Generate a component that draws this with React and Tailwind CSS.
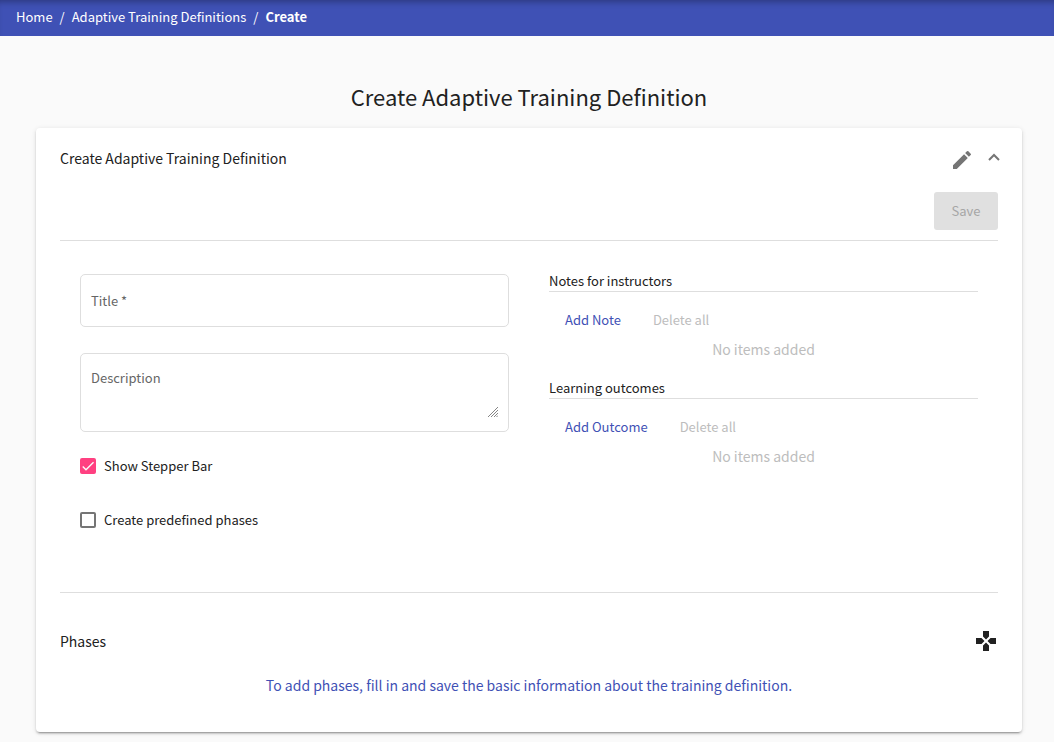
import { useState } from "react";
import { MdEdit, MdGamepad } from "react-icons/md";

function Checkbox({ id, label, defaultChecked }) {
  return (
    <div className="flex h-5 items-center gap-2">
      <span className="grid size-4">
        <input
          id={id}
          type="checkbox"
          defaultChecked={defaultChecked}
          className="peer col-start-1 row-start-1 size-4 appearance-none rounded-xs border-2 border-[#757575] checked:border-[#ff4081] checked:bg-[#ff4081]"
        />
        <svg
          viewBox="0 0 24 24"
          className="pointer-events-none invisible col-start-1 row-start-1 size-4 peer-checked:visible"
          fill="none"
          stroke="#fafafa"
          strokeWidth="2.1"
          aria-hidden="true"
        >
          <path d="M4.1 12.7 9 17.6 20.3 6.3" />
        </svg>
      </span>
      <label htmlFor={id}>{label}</label>
    </div>
  );
}

function ItemList({ title, addLabel }) {
  return (
    <section>
      <h3 className="border-b border-[#dedede]">{title}</h3>
      <div className="flex pt-2.5">
        <button type="button" className="h-9 px-4 text-[#3f51b5]">
          {addLabel}
        </button>
        <button type="button" disabled className="h-9 px-4 text-[#bdbdbd]">
          Delete all
        </button>
      </div>
      <p className="text-center text-[14px] leading-[22px] text-[#bdbdbd]">No items added</p>
    </section>
  );
}

export default function App() {
  const [open, setOpen] = useState(true);

  return (
    <div className="min-h-screen bg-[#fafafa] font-['Noto_Sans_CJK_SC','Noto_Sans',sans-serif] text-[13px] leading-5 text-[#212121]">
      <nav
        aria-label="Breadcrumb"
        className="bg-[#3f51b5] px-4 pt-[7px] pb-[9px] text-white shadow-[inset_0_6px_6px_-4px_rgba(0,0,0,0.3)]"
      >
        <ol className="flex h-5 items-center gap-[7px]">
          <li><a href="#home">Home</a></li>
          <li aria-hidden="true">/</li>
          <li><a href="#definitions">Adaptive Training Definitions</a></li>
          <li aria-hidden="true">/</li>
          <li aria-current="page" className="font-bold">Create</li>
        </ol>
      </nav>

      <main className="pt-11 pr-8 pb-2.5 pl-9">
        <h1 className="text-center text-[22px] leading-8">Create Adaptive Training Definition</h1>

        <div className="mt-4 rounded-sm bg-white px-6 pb-[35px] shadow-[0_3px_1px_-2px_rgba(0,0,0,0.2),0_2px_2px_0_rgba(0,0,0,0.14),0_1px_5px_0_rgba(0,0,0,0.12)]">
          <div className="flex h-16 items-center justify-between">
            <h2 className="pb-1 text-[14px] leading-6">Create Adaptive Training Definition</h2>
            <div className="-mr-0.5 flex items-center gap-3.5 text-[#757575]">
              <MdEdit className="size-6" aria-hidden="true" />
              <button type="button" aria-label="Toggle panel" aria-expanded={open} onClick={() => setOpen(!open)} className="pb-1.5">
                <svg viewBox="0 0 12 8" className="h-2 w-3" fill="none" stroke="currentColor" strokeWidth="2" aria-hidden="true">
                  <path d="M1 7 6 2l5 5" />
                </svg>
              </button>
            </div>
          </div>

          {open && (
            <form>
              <div className="flex justify-end border-b border-[#dedede] pb-2.5">
                <button type="button" disabled className="h-[38px] w-16 rounded-[3px] bg-[#e0e0e0] text-[#a6a6a6]">
                  Save
                </button>
              </div>

              <div className="grid grid-cols-2 gap-10 border-b border-[#dedede] px-5 pt-[30px] pb-[62px]">
                <div className="pt-[3px]">
                  <div className="grid items-center rounded-[5px] border border-[#dedede]">
                    <input
                      id="title"
                      required
                      placeholder=" "
                      className="peer col-start-1 row-start-1 h-[51px] w-full px-2.5 focus:outline-none"
                    />
                    <label
                      htmlFor="title"
                      className="invisible col-start-1 row-start-1 px-2.5 text-[#666666] peer-placeholder-shown:visible"
                    >
                      Title *
                    </label>
                  </div>
                  <div className="mt-[26px] grid items-start rounded-[5px] border border-[#dedede] px-2.5 py-[14px]">
                    <textarea
                      id="description"
                      placeholder=" "
                      className="peer col-start-1 row-start-1 h-[49px] w-full resize-none focus:outline-none"
                    />
                    <label
                      htmlFor="description"
                      className="invisible col-start-1 row-start-1 text-[#666666] peer-placeholder-shown:visible"
                    >
                      Description
                    </label>
                    <svg
                      viewBox="0 0 10 10"
                      className="pointer-events-none col-start-1 row-start-1 size-2.5 self-end justify-self-end"
                      fill="none"
                      stroke="#777777"
                      strokeWidth="0.9"
                      aria-hidden="true"
                    >
                      <path d="M0 10 10 0M3 10l7-7M6 10l4-4M8.500 10 10 8.500" />
                    </svg>
                  </div>
                  <div className="mt-6 flex flex-col gap-[34px]">
                    <Checkbox id="stepper" label="Show Stepper Bar" defaultChecked />
                    <Checkbox id="predefined" label="Create predefined phases" />
                  </div>
                </div>
                <div className="flex flex-col gap-[18px]">
                  <ItemList title="Notes for instructors" addLabel="Add Note" />
                  <ItemList title="Learning outcomes" addLabel="Add Outcome" />
                </div>
              </div>
            </form>
          )}

          <section className="text-[14px] leading-6">
            <div className="flex items-center justify-between pt-9">
              <h2>Phases</h2>
              <MdGamepad className="size-6" aria-hidden="true" />
            </div>
            <p className="mt-5 text-center text-[#3f51b5]">
              To add phases, fill in and save the basic information about the training definition.
            </p>
          </section>
        </div>
      </main>
    </div>
  );
}
